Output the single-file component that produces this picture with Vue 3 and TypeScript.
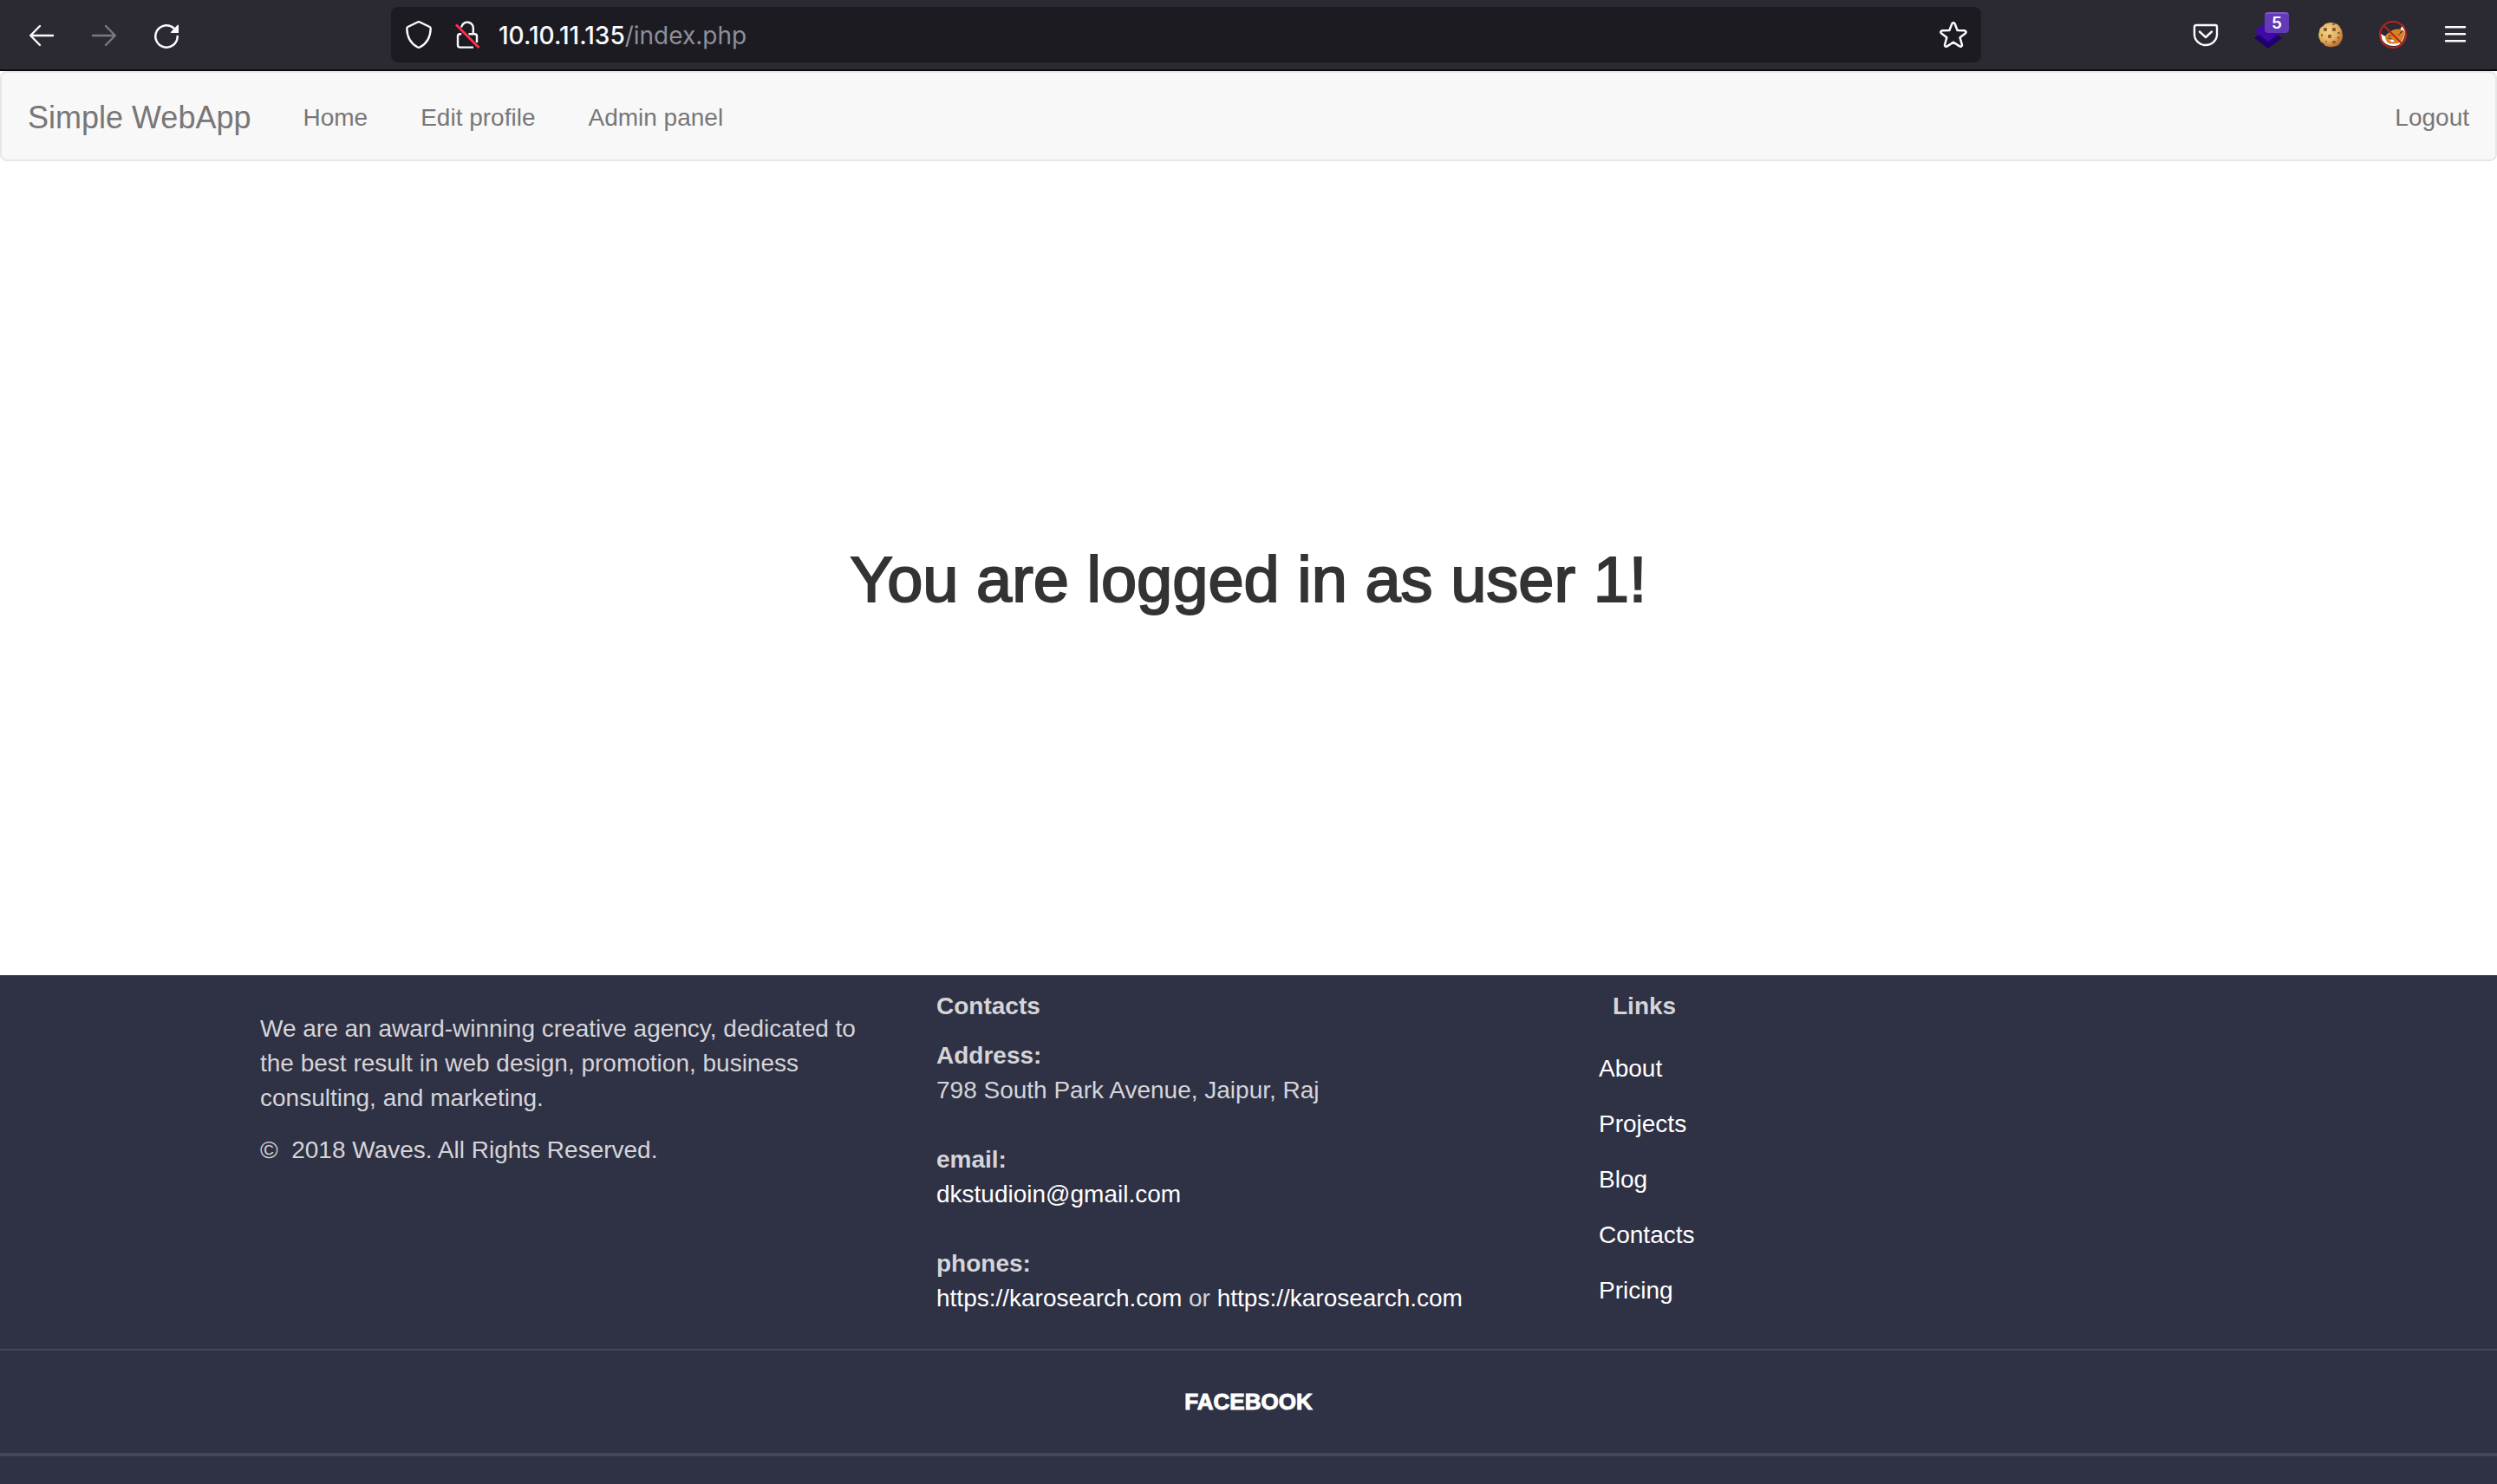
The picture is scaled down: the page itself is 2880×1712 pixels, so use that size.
<script setup lang="ts">
interface NavLink {
  label: string
  href: string
}

const navLinks: NavLink[] = [
  { label: 'Home', href: '#home' },
  { label: 'Edit profile', href: '#profile' },
  { label: 'Admin panel', href: '#admin' },
]

const footerLinks: NavLink[] = [
  { label: 'About', href: '#about' },
  { label: 'Projects', href: '#projects' },
  { label: 'Blog', href: '#blog' },
  { label: 'Contacts', href: '#contacts' },
  { label: 'Pricing', href: '#pricing' },
]

const host = '10.10.11.135'
const path = '/index.php'
</script>

<template>
  <div class="window">
    <div class="toolbar">
      <button class="tool" type="button" aria-label="Back">
        <svg width="32" height="32" viewBox="0 0 32 32" fill="none" stroke="#fbfbfe" stroke-width="2.4" stroke-linecap="round" stroke-linejoin="round">
          <path d="M29 17H3.5M14 6L3.2 17L14 28" />
        </svg>
      </button>
      <button class="tool" type="button" aria-label="Forward" disabled>
        <svg width="32" height="32" viewBox="0 0 32 32" fill="none" stroke="#7a797f" stroke-width="2.4" stroke-linecap="round" stroke-linejoin="round">
          <path d="M3 17H28.5M18 6L28.8 17L18 28" />
        </svg>
      </button>
      <button class="tool" type="button" aria-label="Reload">
        <svg width="32" height="32" viewBox="0 0 32 32" fill="none">
          <path d="M28.7 18A12.7 12.7 0 1 1 24.5 8.500" stroke="#fbfbfe" stroke-width="2.5" stroke-linecap="round" />
          <path d="M30 5.500V13.500Q30 14 29.500 14H21.500Q20.300 14 21 13L28.600 4.900Q30 4 30 5.500Z" fill="#fbfbfe" />
        </svg>
      </button>

      <div class="urlbar">
        <button class="url-icon shield" type="button" aria-label="Tracking protection">
          <svg width="32" height="32" viewBox="0 0 32 32" fill="none" stroke="#fbfbfe" stroke-width="2.4" stroke-linejoin="round">
            <path d="M14.800 1.500Q16 .9 17.200 1.500L28.600 7Q29.800 7.600 29.700 9C29.400 19 26 26 17.200 30.500Q16 31.100 14.800 30.500C6 26 2.600 19 2.300 9Q2.200 7.600 3.400 7Z" />
          </svg>
        </button>
        <button class="url-icon lock" type="button" aria-label="Connection not secure">
          <svg width="32" height="32" viewBox="0 0 32 32" fill="none" stroke-width="2.4">
            <path d="M9.500 6.500A6.800 6.800 0 0 1 22.800 9V15" stroke="#fbfbfe" stroke-linecap="round" />
            <path d="M9.200 15.200H7.500Q5 15.200 5 17.700V28Q5 30.600 7.600 30.600H23M17.500 15.200H24.500Q27 15.200 27 17.700V25" stroke="#fbfbfe" />
            <path d="M3 4.500L29.500 31" stroke="#ff2f4b" stroke-width="2.8" />
          </svg>
        </button>
        <label class="host" for="address">{{ host }}</label>
        <input id="address" class="path" type="text" :value="path" spellcheck="false" />
        <button class="url-icon" type="button" aria-label="Bookmark this page">
          <svg width="32" height="32" viewBox="0 0 32 32" fill="none" stroke="#fbfbfe" stroke-width="2.5" stroke-linejoin="round">
            <path d="M14.300 3.600C15 1.900 17 1.900 17.700 3.600L20.600 11L28.800 11.300C30.700 11.500 31.200 13.400 29.800 14.500L23.600 19.300L25.900 27.500C26.200 29.300 24.700 30.200 23.200 29.400L16 24.700L8.800 29.400C7.300 30.200 5.800 29.300 6.100 27.500L8.400 19.300L2.200 14.500C.8 13.400 1.300 11.500 3.200 11.300L11.400 11Z" />
          </svg>
        </button>
      </div>

      <button class="tool" type="button" aria-label="Save to Pocket">
        <svg width="32" height="32" viewBox="0 0 32 32" fill="none" stroke="#fbfbfe" stroke-width="2.4" stroke-linecap="round" stroke-linejoin="round">
          <path d="M5 5H27Q29 5 29 7V15.500A13 12.500 0 0 1 3 15.500V7Q3 5 5 5Z" />
          <path d="M9 12.500L16 19L23 12.500" />
        </svg>
      </button>
      <button class="tool" type="button" aria-label="Wappalyzer">
        <svg width="32" height="32" viewBox="0 0 32 32">
          <path d="M16 8L32 20L16 32L0 20Z" fill="#1e0070" />
          <path d="M16 0L32 12L16 24L0 12Z" fill="#4108a8" />
        </svg>
        <span class="count">5</span>
      </button>
      <button class="tool" type="button" aria-label="Cookie editor">
        <svg width="32" height="32" viewBox="0 0 32 32">
          <defs>
            <radialGradient id="cookie" cx="38%" cy="34%" r="70%">
              <stop offset="0" stop-color="#f6d384" />
              <stop offset=".6" stop-color="#e2b062" />
              <stop offset="1" stop-color="#b9692a" />
            </radialGradient>
          </defs>
          <path d="M13 2.600Q17 1 21 3Q25 3.500 27 7.500Q30 11 29.700 15Q31 20 28 24Q26 29 21 29.500Q16 31 11.500 29.300Q9 29.300 8.500 26.500Q4 25 3.300 21Q1.200 17 3 13Q2.800 8 7.500 6Q9.500 3 13 2.600Z" fill="url(#cookie)" />
          <g fill="#8a5a30">
            <rect x="8" y="8" width="4" height="4" rx="1" />
            <rect x="18" y="8" width="4" height="4" rx="1" />
            <rect x="13" y="16" width="4" height="4" rx="1" />
            <rect x="18" y="23" width="4" height="3" rx="1" />
            <rect x="24" y="13" width="3" height="2" rx="1" />
            <rect x="5" y="15" width="2" height="3" rx="1" />
            <rect x="24" y="18" width="2" height="3" rx="1" />
            <rect x="10" y="23" width="2" height="2" rx="1" />
            <rect x="18" y="3" width="3" height="2" rx="1" />
          </g>
        </svg>
      </button>
      <button class="tool" type="button" aria-label="FoxyProxy disabled">
        <svg width="32" height="32" viewBox="0 0 32 32">
          <path d="M2 15L3.500 22Q8 29 16 29Q22 29.500 25 26Q30 20 30 12L28 5Q25 7 24.500 11L19 10Q12 12 7 18Z" fill="#fff" />
          <path d="M7 19Q11 11 21 9.500Q26 9 29.500 13Q29 20 24.500 25Q20 27 13 26.500Q8 25.500 7 19Z" fill="#d98225" />
          <path d="M10 20Q14 20 18 23M22 17L28 11M11 18L14 17M24 14L26 12" fill="none" stroke="#5a371c" stroke-width="1" />
          <path d="M12 22L16 21.500L18 23.500L14.500 24.500Z" fill="#fff" />
          <path d="M5.500 5.500L26.500 26.500" stroke="#bb2318" stroke-width="2" />
          <circle cx="16" cy="16" r="15" fill="none" stroke="#bb2318" stroke-width="2" />
        </svg>
      </button>
      <button class="tool" type="button" aria-label="Menu">
        <svg width="32" height="32" viewBox="0 0 32 32" stroke="#fbfbfe" stroke-width="2.4" stroke-linecap="round">
          <path d="M5 7.200H27M5 15.200H27M5 23.200H27" />
        </svg>
      </button>
    </div>

    <nav class="navbar">
      <a class="brand" href="#top">Simple WebApp</a>
      <a v-for="link in navLinks" :key="link.label" class="nav-link" :href="link.href">{{ link.label }}</a>
      <a class="nav-link logout" href="#logout">Logout</a>
    </nav>

    <main class="welcome">
      <h1>You are logged in as user 1!</h1>
    </main>

    <footer class="footer">
      <div class="columns">
        <section class="about">
          <p>We are an award-winning creative agency, dedicated to the best result in web design, promotion, business consulting, and marketing.</p>
          <p>©&nbsp; 2018 Waves. All Rights Reserved.</p>
        </section>
        <section>
          <h5>Contacts</h5>
          <dl>
            <dt>Address:</dt>
            <dd>798 South Park Avenue, Jaipur, Raj</dd>
          </dl>
          <dl>
            <dt>email:</dt>
            <dd><a href="#email">dkstudioin@gmail.com</a></dd>
          </dl>
          <dl>
            <dt>phones:</dt>
            <dd><a href="#phone">https://karosearch.com</a> or <a href="#phone">https://karosearch.com</a></dd>
          </dl>
        </section>
        <section>
          <h5>Links</h5>
          <ul>
            <li v-for="link in footerLinks" :key="link.label">
              <a :href="link.href">{{ link.label }}</a>
            </li>
          </ul>
        </section>
      </div>
      <div class="social">
        <a href="#facebook">FACEBOOK</a>
      </div>
    </footer>
  </div>
</template>

<style>
html,
body,
#app {
  height: 100%;
}
</style>

<style scoped>
.window {
  display: flex;
  flex-direction: column;
  min-height: 100%;
  background: #fff;
  font-family: "Liberation Sans", Arial, sans-serif;
  font-size: 28px;
  line-height: 40px;
  color: #333;
}

a {
  text-decoration: none;
}

button {
  border: 0;
  padding: 0;
  background: none;
  font: inherit;
}

svg {
  display: block;
}

.toolbar {
  display: flex;
  align-items: center;
  height: 80px;
  padding: 0 12px;
  background: #2b2a33;
  border-bottom: 2px solid #0c0c0d;
}

.tool {
  position: relative;
  display: flex;
  justify-content: center;
  flex: none;
  width: 72px;
}

.count {
  position: absolute;
  top: -10px;
  right: 12px;
  width: 28px;
  height: 24px;
  box-sizing: border-box;
  border-top: 2px solid #7f5cc4;
  border-radius: 4px;
  background: #643ab7;
  color: #fff;
  font: 600 19px/22px Inter, sans-serif;
  text-align: center;
}

.urlbar {
  display: flex;
  align-items: center;
  flex: 1;
  height: 64px;
  box-sizing: border-box;
  margin: 0 223px;
  padding: 0 16px;
  border-radius: 8px;
  background: #1c1b22;
  font-family: Inter, Roboto, sans-serif;
}

.url-icon {
  flex: none;
}

.shield {
  margin-right: 24px;
}

.lock {
  margin-right: 20px;
}

.host {
  padding-top: 2px;
  color: #fbfbfe;
  font-weight: 500;
}

.path {
  flex: 1;
  min-width: 0;
  border: 0;
  padding: 2px 0 0;
  outline: 0;
  background: none;
  color: #8f8f9a;
  font: inherit;
}

.navbar {
  display: flex;
  align-items: center;
  border: 2px solid #e7e7e7;
  border-radius: 8px;
  background: #f8f8f8;
}

.brand,
.nav-link {
  padding: 32px 30px 28px;
  color: #777;
}

.brand {
  font-size: 36px;
}

.nav-link + .nav-link {
  margin-left: 1px;
}

.nav-link.logout {
  margin-left: auto;
}

.welcome {
  padding: 443px 30px 416px;
  text-align: center;
}

h1 {
  margin: 0;
  font-size: 74px;
  font-weight: 400;
  line-height: 80px;
  -webkit-text-stroke: 2px #333;
}

.footer {
  flex: 1;
  background: #2f3144;
  color: #d5d5d9;
}

.footer a {
  color: #fff;
}

.columns {
  display: grid;
  grid-template-columns: repeat(3, 1fr);
  max-width: 2340px;
  margin: 0 auto;
}

.columns section {
  padding: 20px 30px 0;
}

.columns .about {
  padding-top: 42px;
}

p {
  margin: 0 0 20px;
}

h5 {
  margin: 0 0 22px;
  font-size: 28px;
  line-height: 31px;
}

dl {
  margin: 0 0 40px;
}

dl:last-child {
  margin-bottom: 38px;
}

dt {
  font-weight: 700;
}

dd {
  margin: 0;
}

ul {
  margin: 25px 0 0 -16px;
  padding: 0;
  list-style: none;
}

li {
  padding: 12px 0;
}

.social {
  display: flex;
  justify-content: center;
  padding: 39px 0;
  border-top: 2px solid #444659;
  border-bottom: 4px solid #444659;
}

.social a {
  font-size: 26px;
  font-weight: 700;
  -webkit-text-stroke: 1px #fff;
}
</style>
